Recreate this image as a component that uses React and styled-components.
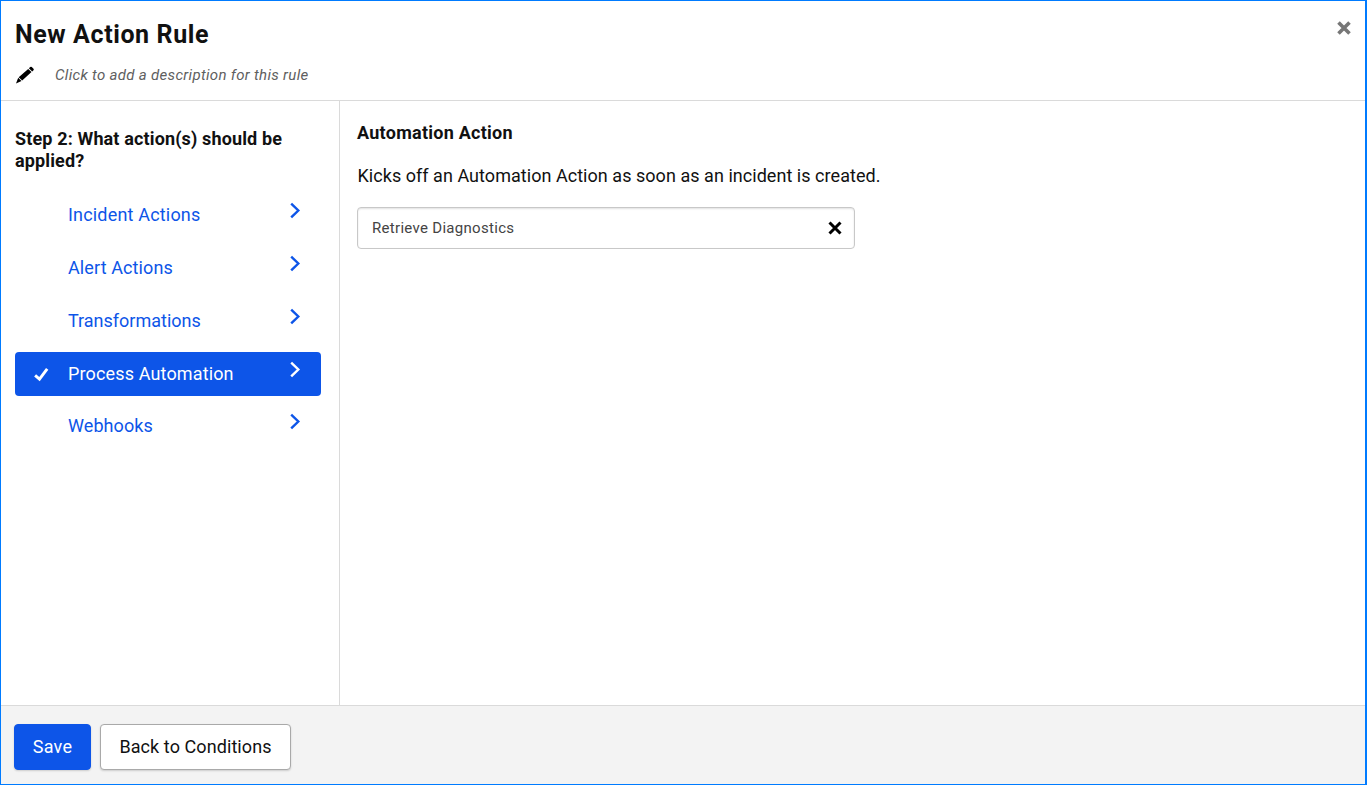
import React from "react";
import styled, { createGlobalStyle } from "styled-components";

const GlobalStyle = createGlobalStyle`
  * { box-sizing: border-box; }
  body { margin: 0; background: #fff; }
  button { font: inherit; cursor: pointer; }
  h1, h2, h3, p { margin: 0; }
  svg { display: block; flex: none; }
`;

const Dialog = styled.div`
  display: flex;
  flex-direction: column;
  width: 1367px;
  height: 785px;
  border: 1px solid #007bff;
  border-right-width: 2px;
  background: #fff;
  color: #111;
  font-family: Roboto, "Liberation Sans", sans-serif;
  font-size: 18px;
`;

const Header = styled.header`
  display: flex;
  justify-content: space-between;
  align-items: flex-start;
  height: 100px;
  padding: 19px 14px 0 14px;
  border-bottom: 1px solid #dadada;
`;

const Title = styled.h1`
  font-size: 25px;
  line-height: 30px;
  font-weight: 700;
  letter-spacing: 0.6px;
  white-space: nowrap;
`;

const DescriptionRow = styled.div`
  display: flex;
  align-items: center;
  gap: 20px;
  margin-top: 15px;
`;

const Description = styled.span`
  color: #606060;
  font-size: 15px;
  line-height: 20px;
  font-style: italic;
  letter-spacing: 0.31px;
  white-space: nowrap;
`;

const IconButton = styled.button`
  display: block;
  padding: 0;
  border: 0;
  background: transparent;
  color: ${(p) => p.$color};
  margin-top: ${(p) => p.$top || 0}px;
`;

const Body = styled.div`
  display: flex;
  flex: 1;
`;

const Sidebar = styled.aside`
  width: 339px;
  padding: 27px 18px 0 14px;
  border-right: 1px solid #dadada;
`;

const StepTitle = styled.h2`
  font-size: 18px;
  line-height: 22px;
  font-weight: 700;
  letter-spacing: ${(p) => p.$spacing}px;
`;

const NavList = styled.nav`
  display: flex;
  flex-direction: column;
  gap: 8.75px;
  margin-top: 21.4px;
`;

const NavItem = styled.a`
  display: flex;
  align-items: center;
  height: 44px;
  padding: 0 20px 0 18px;
  border-radius: 4px;
  background: ${(p) => (p.$active ? "#0d55e8" : "transparent")};
  color: ${(p) => (p.$active ? "#fff" : "#0d55e8")};
`;

const CheckSlot = styled.span`
  width: 35px;
  padding-top: 3px;
`;

const NavLabel = styled.span`
  flex: 1;
  line-height: 22px;
  letter-spacing: ${(p) => p.$spacing}px;
`;

const ChevronSlot = styled.span`
  padding-bottom: 9px;
`;

const Content = styled.main`
  flex: 1;
  padding: 21px 18px 0 17px;
`;

const Text = styled.p`
  margin: 21px 0 0 0.5px;
  line-height: 22px;
  letter-spacing: 0.04px;
`;

const SelectedField = styled.div`
  display: flex;
  align-items: center;
  justify-content: space-between;
  width: 498px;
  height: 42px;
  margin-top: 20px;
  padding: 0 12px 0 14px;
  border: 1px solid #c8c8c8;
  border-radius: 4px;
  box-shadow: inset 0 1px 2px rgba(0, 0, 0, 0.12);
  color: #444;
  font-size: 15px;
  letter-spacing: 0.3px;
`;

const Footer = styled.footer`
  display: flex;
  gap: 9px;
  height: 79px;
  padding: 18px 13px 0;
  border-top: 1px solid #dadada;
  background: #f3f3f3;
`;

const Button = styled.button`
  width: ${(p) => p.$width}px;
  height: 46px;
  padding: 0 0 2px;
  border: 1px solid ${(p) => (p.$primary ? "#0d55e8" : "#a9a9a9")};
  border-radius: 4px;
  background: ${(p) => (p.$primary ? "#0d55e8" : "#fff")};
  color: ${(p) => (p.$primary ? "#fff" : "#111")};
  box-shadow: 0 1px 2px rgba(0, 0, 0, 0.16);
  letter-spacing: ${(p) => p.$spacing}px;
  white-space: nowrap;
`;

const Pencil = () => (
  <svg width="20" height="20" viewBox="0 0 20 20" fill="#000">
    <path d="M13.9 3.3 15.2 2.1q.8-.7 1.6 0l1.7 1.6q.7.8 0 1.5l-1.3 1.3zM13.2 3.9 16.5 7.1 7.2 15.6 3.7 12.2zM3.2 12.8 6.5 16 1 18.6z" />
  </svg>
);

const Cross = ({ size, stroke }) => (
  <svg width={size} height={size} viewBox="0 0 14 14" fill="none" stroke="currentColor" strokeWidth={stroke}>
    <path d="M1.5 1.5l11 11M12.5 1.5l-11 11" />
  </svg>
);

const Check = () => (
  <svg width="17" height="16" viewBox="0 0 17 16" fill="none" stroke="currentColor" strokeWidth="2.9">
    <path d="M2.1 8.3 6.5 12.2 14.2 1.8" />
  </svg>
);

const Chevron = () => (
  <svg width="11" height="17" viewBox="0 0 11 17" fill="none" stroke="currentColor" strokeWidth="2.4">
    <path d="M1.2 1.6 8.3 8.5l-7.1 6.9" />
  </svg>
);

const actions = [
  { label: "Incident Actions", spacing: 0.18 },
  { label: "Alert Actions", spacing: 0.11 },
  { label: "Transformations", spacing: 0 },
  { label: "Process Automation", spacing: 0.14, active: true },
  { label: "Webhooks", spacing: 0.08 },
];

export default function App() {
  return (
    <>
      <GlobalStyle />
      <Dialog>
        <Header>
          <div>
            <Title>New Action Rule</Title>
            <DescriptionRow>
              <Pencil />
              <Description>Click to add a description for this rule</Description>
            </DescriptionRow>
          </div>
          <IconButton $color="#777" $top={1} aria-label="Close">
            <Cross size={14} stroke={3.6} />
          </IconButton>
        </Header>
        <Body>
          <Sidebar>
            <StepTitle $spacing={0.14}>
              Step 2: What action(s) should be<br />applied?
            </StepTitle>
            <NavList>
              {actions.map((a) => (
                <NavItem key={a.label} $active={a.active}>
                  <CheckSlot>{a.active && <Check />}</CheckSlot>
                  <NavLabel $spacing={a.spacing}>{a.label}</NavLabel>
                  <ChevronSlot><Chevron /></ChevronSlot>
                </NavItem>
              ))}
            </NavList>
          </Sidebar>
          <Content>
            <StepTitle $spacing={0.26}>Automation Action</StepTitle>
            <Text>Kicks off an Automation Action as soon as an incident is created.</Text>
            <SelectedField>
              <span>Retrieve Diagnostics</span>
              <IconButton $color="#000" aria-label="Clear">
                <Cross size={14} stroke={3} />
              </IconButton>
            </SelectedField>
          </Content>
        </Body>
        <Footer>
          <Button $primary $width={77} $spacing={0.3}>Save</Button>
          <Button $width={191} $spacing={0.08}>Back to Conditions</Button>
        </Footer>
      </Dialog>
    </>
  );
}
